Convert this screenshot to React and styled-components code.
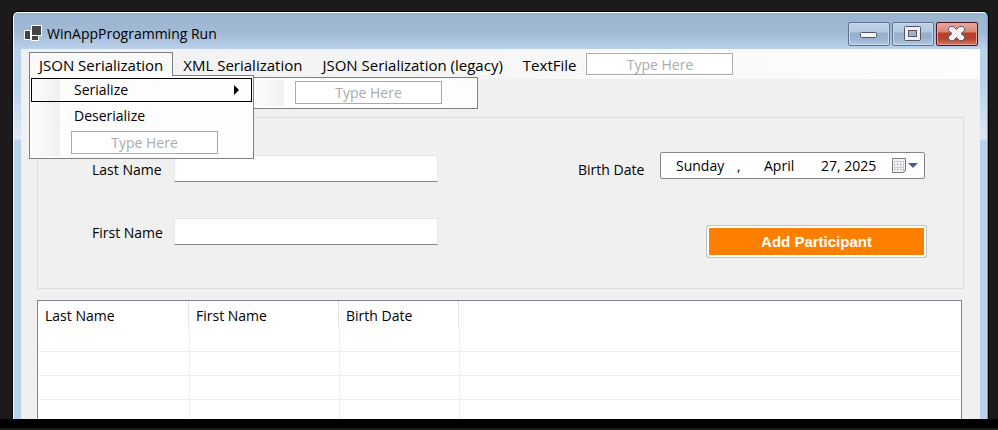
import React from 'react';
import styled, { createGlobalStyle } from 'styled-components';

const GlobalStyle = createGlobalStyle`
  * { box-sizing: border-box; }
  body { margin: 0; background: #1b1b1b; }
  body, button, input {
    font-family: "Open Sans", "Noto Sans", sans-serif;
    font-size: 14px;
    line-height: 20px;
    color: #000;
  }
`;

const Desktop = styled.div`
  display: flex;
  flex-direction: column;
  height: 100vh;
  overflow: hidden;
  padding: 12px 10px 0 13px;
`;

const Window = styled.main`
  flex: 1;
  min-height: 0;
  display: flex;
  flex-direction: column;
  padding: 0 7px;
  border: solid #fff;
  border-width: 1px 1px 0;
  border-right-color: #3bb4dc;
  border-radius: 5px 5px 0 0;
  box-shadow: 0 0 0 1px #000;
  background: linear-gradient(
    #99b4d1 0, #a2bad6 20px, #b9d1ea 36px, #b9d1ea 70px,
    #dce8f6 126px, #b9d1ea 127px
  );
`;

const Taskbar = styled.div`
  position: relative;
  flex: none;
  height: 11px;
  margin: 0 -10px 0 -13px;
  background: #000;
  border-bottom: 2px solid #1b1b1b;
`;

const TitleBar = styled.header`
  flex: none;
  display: flex;
  align-items: flex-start;
  height: 36px;
  padding: 9px 2px 0 3px;
`;

const AppIcon = styled.svg`
  flex: none;
  width: 18px;
  height: 18px;
  margin: 3px 5px 0 0;
`;

const Title = styled.h1`
  flex: 1;
  margin: 2px 0 0;
  font-size: 14px;
  font-weight: 400;
  line-height: 20px;
`;

const Caption = styled.div`
  display: flex;
  gap: 2px;
`;

const CaptionButton = styled.button`
  display: grid;
  place-items: center;
  width: 42px;
  height: 24px;
  padding: 0;
  border: 1px solid ${(p) => (p.$danger ? '#47161f' : '#5f7390')};
  border-radius: 2px;
  box-shadow: inset 0 0 0 1px ${(p) => (p.$danger ? '#e6a196' : '#c7d9ec')};
  background: ${(p) =>
    p.$danger
      ? 'linear-gradient(#e9a99f 0, #d98476 9px, #b93d26 10px, #b8432d 16px, #d57c69)'
      : 'linear-gradient(#c0d3e8 0, #b3c8df 9px, #95aecb 10px, #9bb4d0 16px, #b4cbe4)'};
`;

const Glyph = styled.svg`
  display: block;
  width: 20px;
  height: 18px;
`;

const Client = styled.div`
  flex: 1;
  min-height: 0;
  display: flex;
  flex-direction: column;
  background: #f0f0f0;
`;

const MenuBar = styled.nav`
  flex: none;
  display: flex;
  align-items: flex-start;
  height: 30px;
  padding: 3px 8px 0;
  background: linear-gradient(90deg, #f0f0f0, #fdfdfd);
`;

const MenuSlot = styled.div`
  position: relative;
`;

const MenuButton = styled.button`
  display: block;
  height: 25px;
  padding: 0 9px;
  border: 1px solid ${(p) => (p.$open ? '#808080' : 'transparent')};
  border-bottom: 0;
  background: ${(p) => (p.$open ? 'linear-gradient(#f8f8f8, #fcfcfc)' : 'none')};
  font-size: 15px;
  white-space: nowrap;
`;

const Popup = styled.div`
  position: absolute;
  z-index: ${(p) => (p.$nested ? 1 : 2)};
  top: ${(p) => (p.$nested ? '25px' : '23px')};
  left: ${(p) => (p.$nested ? '224px' : '0')};
  width: 225px;
  padding: ${(p) => (p.$nested ? '2px 1px 4px' : '2px 1px 4px')};
  border: 1px solid #808080;
  background:
    linear-gradient(90deg, #fcfcfc, #f0f0f0) 2px 2px / 28px calc(100% - 4px) no-repeat,
    #fdfdfd;
`;

const PopupGap = styled.span`
  position: absolute;
  z-index: 3;
  top: 23px;
  left: 1px;
  right: 1px;
  height: 1px;
  background: #fcfcfc;
`;

const PopupItem = styled.button`
  display: flex;
  align-items: center;
  justify-content: space-between;
  width: 100%;
  height: ${(p) => (p.$selected ? '24px' : '28px')};
  padding: 0 11px 0 42px;
  border: 1px solid ${(p) => (p.$selected ? '#000' : 'transparent')};
  background: ${(p) => (p.$selected ? 'linear-gradient(90deg, transparent 28px, #fdfdfd 0)' : 'none')};
  text-align: left;
`;

const Arrow = styled.svg`
  width: 6px;
  height: 10px;
`;

const TypeHere = styled.input`
  display: block;
  width: 147px;
  height: ${(p) => (p.$inBar ? '22px' : '23px')};
  margin: ${(p) => (p.$inBar ? '1px 0 0' : '1px 0 0 40px')};
  padding: 0;
  border: 1px solid #a9a9a9;
  box-shadow: 0 0 0 1px #fff;
  background: #fff;
  text-align: center;
  &::placeholder { color: #ababab; opacity: 1; }
`;

const Content = styled.div`
  flex: 1;
  min-height: 0;
  display: flex;
  flex-direction: column;
  gap: 11px;
  padding: 38px 16px 0;
`;

const Panel = styled.form`
  flex: none;
  display: flex;
  justify-content: space-between;
  padding: 34px 36px 30px 54px;
  border: 1px solid #dcdcdc;
`;

const Column = styled.div`
  display: flex;
  flex-direction: column;
  gap: ${(p) => (p.$end ? '45px' : '36px')};
  padding-top: ${(p) => (p.$end ? '0' : '3px')};
  align-items: ${(p) => (p.$end ? 'flex-end' : 'stretch')};
`;

const Field = styled.div`
  display: flex;
  padding-right: ${(p) => (p.$end ? '2px' : '0')};
`;

const Label = styled.label`
  flex: none;
  width: 82px;
  padding-top: ${(p) => (p.$low ? '8px' : '5px')};
`;

const TextBox = styled.input`
  width: 264px;
  height: 27px;
  padding: 0 4px;
  border: 1px solid #e6e6e6;
  border-bottom-color: #868686;
  border-radius: 1px;
  background: #fff;
`;

const DatePicker = styled.div`
  display: flex;
  align-items: center;
  width: 265px;
  height: 27px;
  padding: 0 6px 0 15px;
  border: 1px solid #868686;
  border-radius: 2px;
  background: #fff;
`;

const DatePart = styled.input`
  width: ${(p) => p.$width}px;
  padding: 0;
  border: 0;
  background: none;
`;

const Comma = styled.span`
  width: 27px;
`;

const DropButton = styled.button`
  display: flex;
  align-items: center;
  margin-left: auto;
  padding: 0;
  border: 0;
  background: none;
`;

const CalendarIcon = styled.svg`
  width: 27px;
  height: 18px;
`;

const AddButton = styled.button`
  width: 221px;
  height: 33px;
  padding: 0;
  border: 1px solid #c4c4c4;
  border-radius: 3px;
  box-shadow: inset 0 0 0 2px #fff;
  background: #ff8000;
  color: #fff;
  font-family: "Liberation Sans", Arial, sans-serif;
  font-size: 15px;
  font-weight: 700;
`;

const ListView = styled.div`
  flex: 1;
  min-height: 0;
  overflow: hidden;
  margin-right: 2px;
  padding: 0 1px 0 0;
  border: 1px solid #828790;
  border-bottom: 0;
  background: #fff;
`;

const Table = styled.table`
  width: 100%;
  table-layout: fixed;
  border-collapse: separate;
  border-spacing: 0;
`;

const Col = styled.col`
  width: ${(p) => (p.$width ? `${p.$width}px` : 'auto')};
`;

const Th = styled.th`
  height: 27px;
  padding: 2px 7px 0;
  border-right: ${(p) => (p.$last ? '0' : '1px solid #e5e5e5')};
  font-weight: 400;
  text-align: left;
`;

const Td = styled.td`
  height: 24px;
  padding: 0 6px;
  border-bottom: 1px solid #f0f0f0;
  border-left: ${(p) => (p.$first ? '0' : '1px solid #f0f0f0')};
`;

const columns = [
  { name: 'Last Name', width: 151 },
  { name: 'First Name', width: 150 },
  { name: 'Birth Date', width: 120 },
];
const blankRows = [0, 1, 2, 3];

export default function App() {
  return (
    <>
      <GlobalStyle />
      <Desktop>
        <Window>
          <TitleBar>
            <AppIcon viewBox="0 0 18 18" aria-hidden="true">
              <path fill="#fff" d="M7 0h11v11h-3v5H7v-1H0V5h7z" />
              <path fill="#444" d="M8 1h9v9H8zM1 6h5v8H1zM8 11h6v4H8z" />
            </AppIcon>
            <Title>WinAppProgramming Run</Title>
            <Caption>
              <CaptionButton type="button" aria-label="Minimize">
                <Glyph viewBox="0 0 20 18" aria-hidden="true">
                  <rect x="1.5" y="7.5" width="16" height="5" rx="1" fill="#f4f4f4" stroke="#535666" />
                </Glyph>
              </CaptionButton>
              <CaptionButton type="button" aria-label="Maximize">
                <Glyph viewBox="0 0 20 18" aria-hidden="true">
                  <rect x="1.5" y="1.5" width="16" height="14" rx="1" fill="#f0f0f0" stroke="#535666" />
                  <rect x="5.5" y="5.5" width="8" height="6" fill="#9bb3cf" stroke="#535666" />
                </Glyph>
              </CaptionButton>
              <CaptionButton type="button" aria-label="Close" $danger>
                <Glyph viewBox="0 0 20 18" aria-hidden="true">
                  <path
                    d="M1.5 3.5l2-2h3l3 3 3-3h3l2 2v2l-3.500 3 3.500 3v2l-2 2h-3l-3-3-3 3h-3l-2-2v-2l3.500-3-3.500-3z"
                    fill="#f2f2f2"
                    stroke="#535666"
                    strokeLinejoin="round"
                  />
                </Glyph>
              </CaptionButton>
            </Caption>
          </TitleBar>
          <Client>
            <MenuBar aria-label="Main menu">
              <MenuSlot>
                <MenuButton type="button" $open aria-expanded="true">JSON Serialization</MenuButton>
                <PopupGap />
                <Popup>
                  <PopupItem type="button" $selected aria-expanded="true">
                    Serialize
                    <Arrow viewBox="0 0 6 10" aria-hidden="true">
                      <path d="M0 0l5 5-5 5z" />
                    </Arrow>
                  </PopupItem>
                  <PopupItem type="button">Deserialize</PopupItem>
                  <TypeHere placeholder="Type Here" aria-label="New menu entry" />
                </Popup>
                <Popup $nested>
                  <TypeHere placeholder="Type Here" aria-label="New Serialize entry" />
                </Popup>
              </MenuSlot>
              <MenuButton type="button">XML Serialization</MenuButton>
              <MenuButton type="button">JSON Serialization (legacy)</MenuButton>
              <MenuButton type="button">TextFile</MenuButton>
              <TypeHere $inBar placeholder="Type Here" aria-label="New menu" />
            </MenuBar>
            <Content>
              <Panel>
                <Column>
                  <Field>
                    <Label htmlFor="last-name">Last Name</Label>
                    <TextBox id="last-name" />
                  </Field>
                  <Field>
                    <Label htmlFor="first-name">First Name</Label>
                    <TextBox id="first-name" />
                  </Field>
                </Column>
                <Column $end>
                  <Field $end>
                    <Label $low htmlFor="birth-date">Birth Date</Label>
                    <DatePicker>
                      <DatePart id="birth-date" $width={61} defaultValue="Sunday" />
                      <Comma>,</Comma>
                      <DatePart $width={57} defaultValue="April" aria-label="Month" />
                      <DatePart $width={60} defaultValue="27, 2025" aria-label="Day and year" />
                      <DropButton type="button" aria-label="Open calendar">
                        <CalendarIcon viewBox="0 0 27 18" aria-hidden="true">
                          <path d="M1.500 1.500h13v12l-2 2h-11z" fill="#f1f1f4" stroke="#85797a" />
                          <path d="M3 4h10v9H3z" fill="#c9ced6" />
                          <path
                            d="M4 5h2v2H4zM7 5h2v2H7zM10 5h2v2h-2zM4 8h2v2H4zM7 8h2v2H7zM10 8h2v2h-2zM4 11h2v1H4zM7 11h2v1H7zM10 11h2v1h-2z"
                            fill="#fff"
                          />
                          <path d="M14.500 13.500h-2v2z" fill="#777" />
                          <path d="M17 6h10l-5 5z" fill="#4a5f87" />
                        </CalendarIcon>
                      </DropButton>
                    </DatePicker>
                  </Field>
                  <AddButton type="button">Add Participant</AddButton>
                </Column>
              </Panel>
              <ListView>
                <Table>
                  <colgroup>
                    {columns.map((c) => <Col key={c.name} $width={c.width} />)}
                    <Col />
                  </colgroup>
                  <thead>
                    <tr>
                      {columns.map((c) => <Th key={c.name} scope="col">{c.name}</Th>)}
                      <Th as="td" $last />
                    </tr>
                  </thead>
                  <tbody>
                    {blankRows.map((row) => (
                      <tr key={row}>
                        <Td $first />
                        <Td />
                        <Td />
                        <Td />
                      </tr>
                    ))}
                  </tbody>
                </Table>
              </ListView>
            </Content>
          </Client>
        </Window>
        <Taskbar />
      </Desktop>
    </>
  );
}
